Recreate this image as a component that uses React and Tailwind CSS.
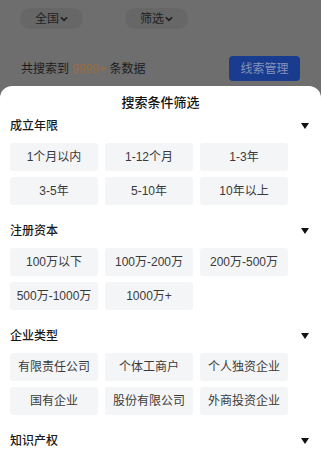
import React from 'react';

const font = { fontFamily: '"Liberation Sans", "Noto Sans CJK SC", sans-serif' };

const sections = [
  { title: '成立年限', options: ['1个月以内', '1-12个月', '1-3年', '3-5年', '5-10年', '10年以上'] },
  { title: '注册资本', options: ['100万以下', '100万-200万', '200万-500万', '500万-1000万', '1000万+'] },
  { title: '企业类型', options: ['有限责任公司', '个体工商户', '个人独资企业', '国有企业', '股份有限公司', '外商投资企业'] },
  { title: '知识产权', options: [] },
];

const Chevron = () => (
  <svg width="8" height="6" viewBox="0 0 9 6" className="ml-[1px]">
    <path d="M1 1l3.5 3.5L8 1" fill="none" stroke="#1c1c1c" strokeWidth="1.8" />
  </svg>
);

const Caret = () => (
  <svg width="8" height="6" viewBox="0 0 8 6">
    <path d="M0 0h8L4 6z" fill="#111" />
  </svg>
);

const Section = ({ title, options }) => (
  <div className="mb-[16px]">
    <div className="flex h-[20px] items-center justify-between pr-[12px]">
      <span className="text-[12px] font-medium text-[#1a1a1a]">{title}</span>
      <Caret />
    </div>
    {options.length > 0 && (
      <div className="mt-[7px] grid w-[278px] grid-cols-[88px_88px_88px] gap-x-[7px] gap-y-[6px]">
        {options.map((o) => (
          <div
            key={o}
            className="flex h-[28px] items-center justify-center rounded-[3px] bg-[#f4f5f7] text-[12px] text-[#3a3a3a]"
          >
            {o}
          </div>
        ))}
      </div>
    )}
  </div>
);

export default function App() {
  return (
    <div className="h-[450px] w-[321px] overflow-hidden bg-[#6e6e6e]" style={font}>
      <div className="flex h-[37px] items-start gap-[42px] pl-[20px] pt-[8px]">
        <div className="flex h-[21px] w-[63px] items-center justify-center rounded-full bg-[#676767] text-[12px] text-[#222]">
          全国<Chevron />
        </div>
        <div className="flex h-[21px] w-[63px] items-center justify-center rounded-full bg-[#676767] text-[12px] text-[#222]">
          筛选<Chevron />
        </div>
      </div>
      <div className="flex h-[49px] items-start justify-between pl-[21px] pr-[21px] pt-[19px]">
        <span className="mt-[4px] text-[12px] text-[#1c1c1c]">
          共搜索到 <span className="text-[#9a6d3c]">9999+</span> 条数据
        </span>
        <div className="flex h-[25px] w-[71px] items-center justify-center rounded-[4px] bg-[#1a3c8e] text-[12px] text-[#8393bb]">
          线索管理
        </div>
      </div>
      <div className="rounded-t-[12px] bg-white pl-[10px] pt-[7px]">
        <div className="mb-[3px] h-[20px] pr-[10px] text-center text-[13px] font-medium leading-[20px] text-[#111]">
          搜索条件筛选
        </div>
        {sections.map((s) => (
          <Section key={s.title} {...s} />
        ))}
      </div>
    </div>
  );
}
